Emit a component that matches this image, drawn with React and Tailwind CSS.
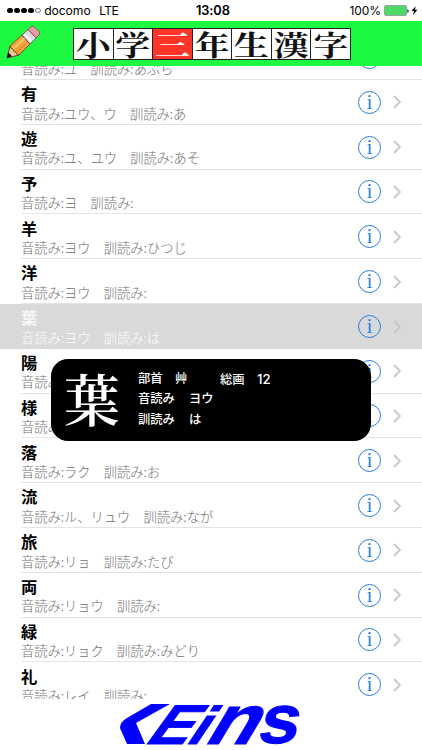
const kanjiList = [
  { kanji: "油", on: "ユ", kun: "あぶら" },
  { kanji: "有", on: "ユウ、ウ", kun: "あ" },
  { kanji: "遊", on: "ユ、ユウ", kun: "あそ" },
  { kanji: "予", on: "ヨ", kun: "" },
  { kanji: "羊", on: "ヨウ", kun: "ひつじ" },
  { kanji: "洋", on: "ヨウ", kun: "" },
  { kanji: "葉", on: "ヨウ", kun: "は" },
  { kanji: "陽", on: "ヨウ", kun: "" },
  { kanji: "様", on: "ヨウ", kun: "さま" },
  { kanji: "落", on: "ラク", kun: "お" },
  { kanji: "流", on: "ル、リュウ", kun: "なが" },
  { kanji: "旅", on: "リョ", kun: "たび" },
  { kanji: "両", on: "リョウ", kun: "" },
  { kanji: "緑", on: "リョク", kun: "みどり" },
  { kanji: "礼", on: "レイ", kun: "" },
];

const title = ["小", "学", "三", "年", "生", "漢", "字"];

const StatusBar = () => {
  return (
    <div className="relative flex h-[21px] shrink-0 items-center bg-white pl-[7px] pr-[4px] font-['Inter','Liberation_Sans',sans-serif] text-[12.2px] leading-none text-black">
      <div className="flex gap-[1.3px]">
        {[0, 1, 2, 3].map((dot) => (
          <span key={dot} className="size-[5.8px] rounded-full bg-black" />
        ))}
        <span className="size-[5.8px] rounded-full border border-gray-500" />
      </div>
      <span className="ml-[3px] mt-px w-[46px] tracking-[-0.1px]">docomo</span>
      <span className="ml-[9px] mt-px text-[12px] tracking-[-0.5px]">LTE</span>
      <span className="absolute left-[196px] top-[5px] text-[12.8px] font-semibold tracking-[-0.1px]">13:08</span>
      <span className="ml-auto mt-px text-[12px] tracking-[-0.1px]">100%</span>
      <span className="ml-[3px] h-[10.5px] w-[23px] rounded-[2px] border border-gray-400 bg-[#4cd964]" />
      <span className="h-[4px] w-[2px] rounded-r-full bg-gray-500" />
      <svg viewBox="0 0 8 10" className="ml-[2px] h-[9px] w-[7px]">
        <path d="M5.4 0 .6 5.6h2.8L2.4 10l5-5.8H4.5z" fill="#000" />
      </svg>
    </div>
  );
};

const Pencil = () => {
  return (
    <svg viewBox="0 0 36 36" className="size-[36px]" strokeLinejoin="round">
      <path d="M2 34 5 22 14 31Z" fill="#eecb98" stroke="#5a4632" strokeWidth="1" />
      <path d="M2 34 3.2 28.6 7.2 32.3Z" fill="#111" />
      <path d="M5 22 17 11 25 20 14 31Q11.5 31 11 28.5 8 28 8 25 5.5 25 5 22Z" fill="#f5a33b" stroke="#73501f" strokeWidth="1" />
      <path d="M8.2 24.8 20 14" stroke="#ffc568" strokeWidth="2" />
      <path d="M11.2 28.3 23 17.5" stroke="#d87c1f" strokeWidth="1" />
      <path d="M17 11 23 5.4 31.2 14 25 20Z" fill="#dedce0" stroke="#66605e" strokeWidth="1" />
      <path d="M20 10.8 26 17" stroke="#f8f8fa" strokeWidth="2" />
      <path d="M23 5.4 26 2.8Q27.6 1.5 29.3 2.8L34 7.6Q35.2 9.3 34 11L31.2 14Z" fill="#e99ca0" stroke="#875d59" strokeWidth="1" />
    </svg>
  );
};

const Header = () => {
  return (
    <div className="flex h-[45px] shrink-0 items-start bg-[#1cf940] pl-[5px]">
      <div className="mt-[3px]">
        <Pencil />
      </div>
      <h1 className="ml-[32px] mt-[7px] flex h-[32px] w-[278px] divide-x divide-[#222] border border-[#222] font-['Noto_Serif_CJK_JP','Noto_Sans_CJK_JP',serif] text-[35px] font-bold">
        {title.map((char, index) => (
          <span
            key={char}
            className={`flex flex-1 items-center justify-center leading-none ${
              index === 2 ? "bg-[#ff3529] text-white" : "bg-white text-[#111]"
            }`}
          >
            <span className="block h-[35px] w-[35px] scale-y-[0.82] leading-[33px]">{char}</span>
          </span>
        ))}
      </h1>
    </div>
  );
};

const KanjiRow = ({ item, selected }) => {
  return (
    <li className={`flex h-[44.8px] items-center pl-[21px] ${selected ? "bg-[#d9d9d9]" : ""}`}>
      <div className={`flex h-full flex-1 items-center ${selected ? "" : "border-b border-[#e4e4e6]"}`}>
        <div className="flex h-full flex-1 flex-col pt-[4.2px]">
          <span className={`text-[16.3px] font-bold leading-[19px] ${selected ? "text-[#f6f6f6]" : "text-black"}`}>
            {item.kanji}
          </span>
          <span
            className={`mt-[1.5px] whitespace-pre text-[13.25px] font-light leading-[18.5px] ${
              selected ? "text-white" : "text-[#707070]"
            }`}
          >
            音読み:{item.on}　訓読み:{item.kun}
          </span>
        </div>
        <span className="mt-px flex size-[23px] items-center justify-center rounded-full border-[1.4px] border-[#2680e3] pb-px font-['Liberation_Serif',serif] text-[20px] leading-none text-[#2680e3]">
          i
        </span>
        <svg viewBox="0 0 8 14" className="ml-[12px] mr-[21px] mt-px h-[14px] w-[8px]">
          <path d="M1 1 7 7 1 13" fill="none" stroke="#c7c7cc" strokeWidth="1.8" />
        </svg>
      </div>
    </li>
  );
};

const KanjiPopup = () => {
  return (
    <div className="absolute left-[51px] top-[359px] flex h-[81.5px] w-[320px] rounded-[17px] bg-black text-[12.3px] font-medium leading-[20px] text-white">
      <span className="ml-[13px] mt-[10px] w-[56px] font-['Noto_Serif_CJK_JP','Noto_Sans_CJK_JP',serif] text-[56px] font-semibold leading-[56px]">
        葉
      </span>
      <div className="ml-[18px] mt-[9px] w-[82px] whitespace-pre">
        <p>部首　艸</p>
        <p>
          音読み<span className="ml-[14px]">ヨウ</span>
        </p>
        <p className="mt-[0.6px]">
          訓読み<span className="ml-[14px]">は</span>
        </p>
      </div>
      <p className="mt-[10px] whitespace-pre">
        総画　<span className="font-['Inter',sans-serif] text-[13.2px]">12</span>
      </p>
    </div>
  );
};

const Logo = () => {
  return (
    <svg
      viewBox="0 0 184 42"
      className="h-[42px] w-[184px]"
      fill="#0000ff"
      fontFamily="Liberation Sans, sans-serif"
      fontWeight="bold"
    >
      <path d="M32 1H51L17 20 26 41H8L1 25Q1 19 8 15Z" />
      <g stroke="#0000ff" strokeWidth="1">
        <text transform="translate(24 40.5) skewX(-36) scale(1.12 1)" fontSize="56">E</text>
        <text transform="translate(65 40.5) skewX(-34) scale(1.15 1)" fontSize="53">i</text>
        <text transform="translate(83 40.5) skewX(-31) scale(1.14 1)" fontSize="70">n</text>
        <text transform="translate(137 40) skewX(-13) scale(1.05 1)" fontSize="69">s</text>
      </g>
    </svg>
  );
};

const App = () => {
  return (
    <div className="relative flex h-[750px] w-[422px] flex-col overflow-hidden bg-white font-['Noto_Sans_CJK_JP',sans-serif]">
      <StatusBar />
      <Header />
      <div className="h-[633px] shrink-0 overflow-hidden">
        <ul className="-mt-[30.8px]">
          {kanjiList.map((item) => (
            <KanjiRow key={item.kanji} item={item} selected={item.kanji === "葉"} />
          ))}
        </ul>
      </div>
      <div className="flex flex-1 items-start pl-[119px] pt-[4px]">
        <Logo />
      </div>
      <KanjiPopup />
    </div>
  );
};

export default App;
